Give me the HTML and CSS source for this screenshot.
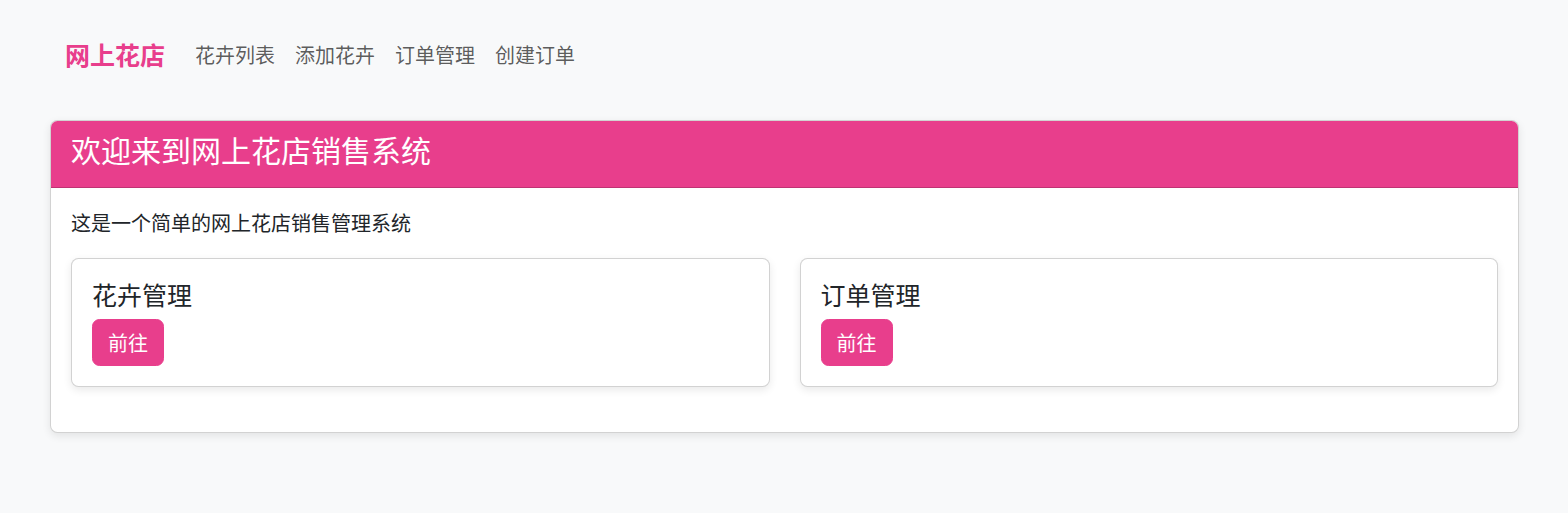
FILE: index.html
```html
<!DOCTYPE html>
<html lang="zh-CN">

<head>
    <meta charset="UTF-8">
    <meta name="viewport" content="width=device-width, initial-scale=1.0">
    <title>网上花店</title>
    <link rel="stylesheet" href="styles.css">
</head>

<body>
    <div class="page">
        <nav class="navbar">
            <a class="brand" href="#">网上花店</a>
            <ul class="nav">
                <li><a class="nav-link" href="#">花卉列表</a></li>
                <li><a class="nav-link" href="#">添加花卉</a></li>
                <li><a class="nav-link" href="#">订单管理</a></li>
                <li><a class="nav-link" href="#">创建订单</a></li>
            </ul>
        </nav>

        <div class="card main-card">
            <div class="card-header">
                <h4>欢迎来到网上花店销售系统</h4>
            </div>
            <div class="card-body">
                <p class="intro">这是一个简单的网上花店销售管理系统</p>
                <div class="row">
                    <div class="card sub-card">
                        <div class="card-body">
                            <h5 class="card-title">花卉管理</h5>
                            <a href="#" class="btn">前往</a>
                        </div>
                    </div>
                    <div class="card sub-card">
                        <div class="card-body">
                            <h5 class="card-title">订单管理</h5>
                            <a href="#" class="btn">前往</a>
                        </div>
                    </div>
                </div>
            </div>
        </div>
    </div>
</body>

</html>
```

FILE: styles.css
```css
body {
    margin: 0;
    background-color: #f8f9fa;
    color: #212529;
    font-family: "Noto Sans CJK SC", "Noto Sans", sans-serif;
    font-size: 20px;
}

a {
    text-decoration: none;
}

.page {
    padding: 20px 49px 20px 50px;
}

.navbar {
    display: flex;
    align-items: center;
    padding: 10px 15px;
    margin-bottom: 30px;
}

.brand {
    color: #e83e8c;
    font-size: 25px;
    font-weight: 700;
    line-height: 37.5px;
    padding: 6px 0;
    margin-right: 20px;
}

.nav {
    display: flex;
    list-style: none;
    margin: 0;
    padding: 0;
}

.nav-link {
    display: block;
    padding: 10px;
    line-height: 30px;
    color: rgba(0, 0, 0, 0.65);
}

.card {
    background-color: #fff;
    border: 1px solid rgba(0, 0, 0, 0.175);
    border-radius: 7.5px;
    box-shadow: 0 3px 9px rgba(0, 0, 0, 0.09);
}

.card-header {
    background-color: #e83e8c;
    color: #fff;
    padding: 10px 20px;
    border-bottom: 1px solid rgba(0, 0, 0, 0.175);
    border-radius: 6.5px 6.5px 0 0;
}

.card-header h4 {
    margin: 0 0 10px;
    font-size: 30px;
    font-weight: 400;
    line-height: 36px;
}

.card-body {
    padding: 20px;
}

.intro {
    margin: 0 0 20px;
    line-height: 30px;
}

.row {
    display: grid;
    grid-template-columns: 1fr 1fr;
    gap: 30px;
}

.sub-card {
    margin-bottom: 25px;
}

.card-title {
    margin: 0 0 10px;
    font-size: 25px;
    font-weight: 400;
    line-height: 30px;
}

.btn {
    display: inline-block;
    background-color: #e83e8c;
    border: 1px solid #e83e8c;
    color: #fff;
    padding: 7.5px 15px;
    line-height: 30px;
    border-radius: 7.5px;
}
```
